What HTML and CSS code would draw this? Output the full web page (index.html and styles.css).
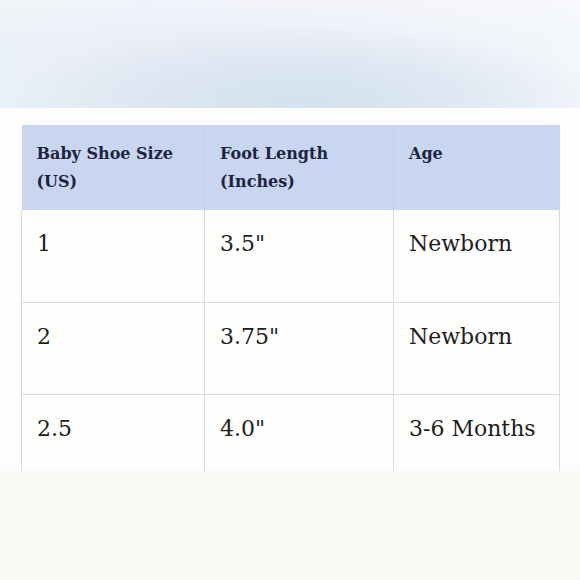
FILE: index.html
```html
<!DOCTYPE html>
<html>
<head>
<meta charset="utf-8">
<link rel="stylesheet" href="styles.css">
</head>
<body>
<div class="band"></div>
<div class="page">
  <div class="clip">
    <table class="sizes">
      <colgroup>
        <col class="c1"><col class="c2"><col class="c3">
      </colgroup>
      <thead>
        <tr><th>Baby Shoe Size<br>(US)</th><th>Foot Length<br>(Inches)</th><th>Age</th></tr>
      </thead>
      <tbody>
        <tr><td>1</td><td>3.5"</td><td>Newborn</td></tr>
        <tr><td>2</td><td>3.75"</td><td>Newborn</td></tr>
        <tr><td>2.5</td><td>4.0"</td><td>3-6 Months</td></tr>
      </tbody>
    </table>
  </div>
  <div class="rest"></div>
</div>
</body>
</html>
```
FILE: styles.css
```css
html, body {
  margin: 0;
  padding: 0;
  width: 580px;
  height: 580px;
  overflow: hidden;
  background: #f7f9f5;
  font-family: "DejaVu Serif", "Liberation Serif", serif;
}
.band {
  height: 108px;
  background:
    radial-gradient(ellipse 300px 75px at 300px 100px, rgba(210, 226, 238, 1), rgba(212, 226, 238, 0.6) 55%, rgba(212, 226, 238, 0) 100%),
    linear-gradient(180deg, rgba(255, 255, 255, 0.3) 0%, rgba(255, 255, 255, 0) 40%),
    linear-gradient(90deg, #eaf1f7 0%, #eceef8 25%, #eef0f9 60%, #f3f6fb 100%);
}
.page {
  background: #fdfefc;
  padding: 17px 0 0 0;
}
.clip {
  height: 346px;
  overflow: hidden;
  padding: 0 21px;
}
.sizes {
  border-collapse: collapse;
  width: 538px;
  table-layout: fixed;
  background: #fefffd;
}
.c1 { width: 183px; }
.c2 { width: 189px; }
.c3 { width: 166px; }
.sizes th {
  background: #c9d6ef;
  color: #1d2440;
  font-weight: bold;
  font-size: 16px;
  line-height: 28px;
  text-align: left;
  vertical-align: top;
  height: 85px;
  box-sizing: border-box;
  padding: 15px 15px 0 15px;
  border-right: 1px solid #c4d0e8;
}
.sizes th:last-child { border-right: none; }
.sizes td {
  color: #1e1e1e;
  font-size: 22px;
  line-height: 26px;
  vertical-align: top;
  height: 92px;
  box-sizing: border-box;
  padding: 21px 15px 0 15px;
  border: 1px solid #d9dcd9;
}
.sizes tbody tr:first-child td { border-top: none; }
.rest {
  height: 109px;
  background: #f7f9f5;
}
```
